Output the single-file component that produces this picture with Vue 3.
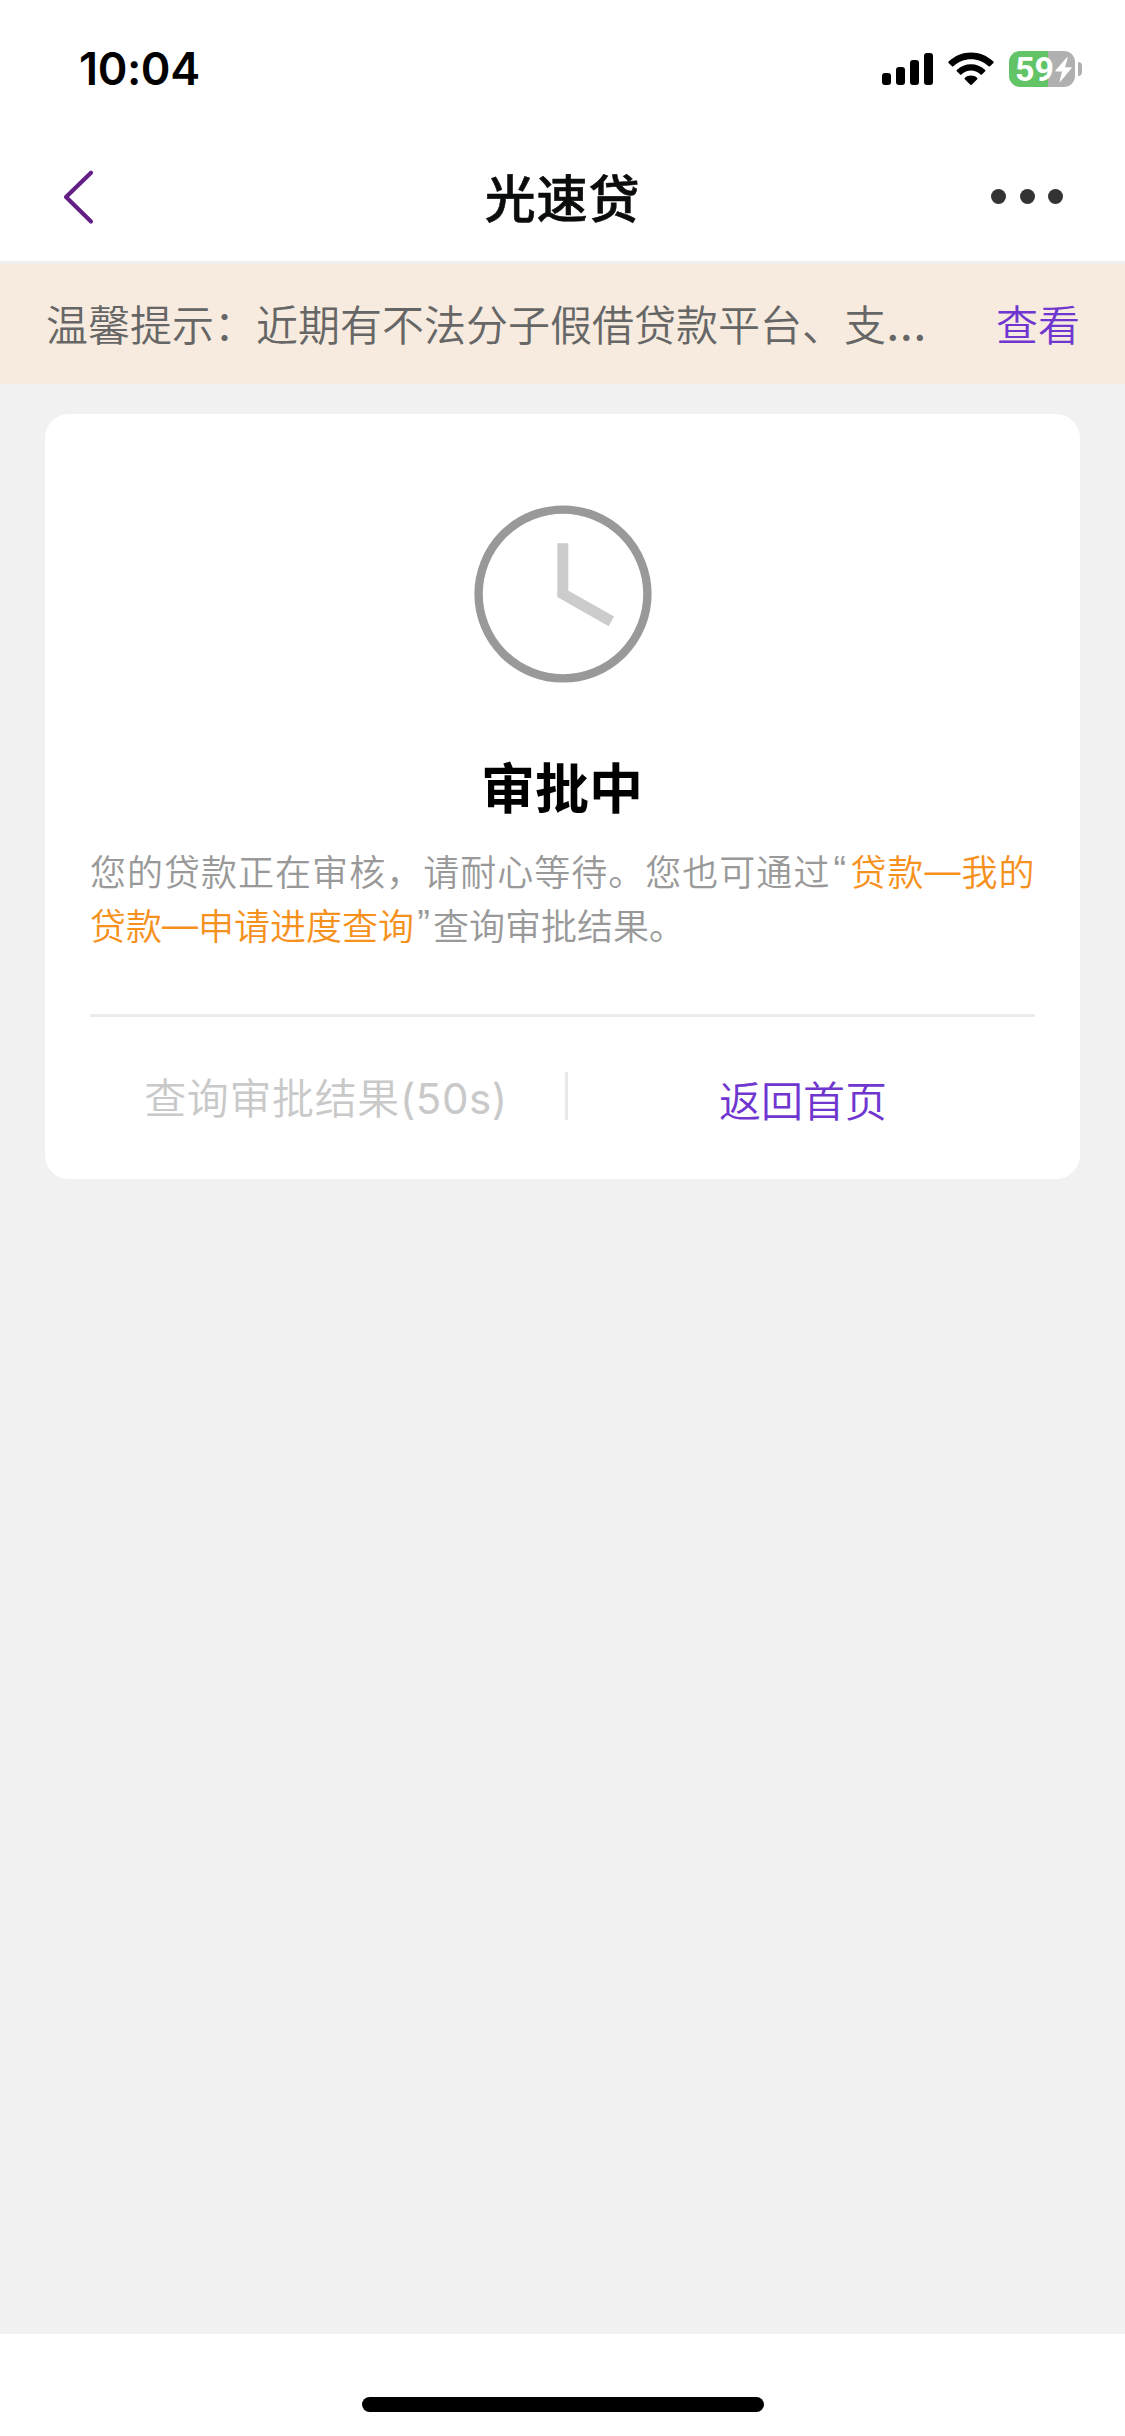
<script setup>
const title = '光速贷'
const notice = '温馨提示：近期有不法分子假借贷款平台、支'
const bars = [12, 18, 25, 32]
const level = 59
const seconds = 50
</script>

<template>
  <div class="screen">
    <header class="status">
      <span class="time">10:04</span>
      <div class="indicators">
        <div class="signal">
          <i v-for="h in bars" :key="h" :style="{ height: h + 'px' }"></i>
        </div>
        <svg class="wifi" width="46" height="34" viewBox="0 0 46 34">
          <path d="M.6 9.6C13 -2.6 33 -2.6 45.4 9.6Q46 10.3 45.4 11L42 14.3Q41.4 14.9 40.7 14.3C30.5 4.8 15.5 4.8 5.3 14.3Q4.6 14.9 4 14.3L.6 11Q0 10.3 .6 9.6Z" />
          <path d="M8.8 17.9C16.6 10.3 29.4 10.3 37.2 17.9Q37.9 18.5 37.2 19.2L33.9 22.5Q33.3 23 32.6 22.5C27 17.3 19 17.3 13.4 22.5Q12.7 23 12.1 22.5L8.8 19.2Q8.1 18.5 8.8 17.9Z" />
          <path d="M16.8 26C20.2 22.8 25.8 22.8 29.2 26Q29.9 26.6 29.2 27.3L23.7 32.7Q23 33.3 22.3 32.7L16.8 27.3Q16.1 26.6 16.8 26Z" />
        </svg>
        <div class="battery">
          <div class="cell">
            <span class="level">{{ level }}</span>
            <svg width="17" height="25" viewBox="0 0 17 25">
              <path d="M12 .3L.4 13.6Q0 14.4 .9 14.4H7L4.6 24.2Q4.8 25 5.5 24.5L16.5 11.2Q17 10.3 16 10.3H10L12.7 .9Q12.8 0 12 .3Z" fill="#fff" />
            </svg>
          </div>
          <i class="nub"></i>
        </div>
      </div>
    </header>

    <nav class="nav">
      <svg class="back" width="34" height="58" viewBox="0 0 34 58">
        <path d="M29 4.7L4 29L29 53.5" fill="none" stroke="#641f87" stroke-width="4.2" stroke-linecap="round" stroke-linejoin="round" />
      </svg>
      <h1>{{ title }}</h1>
      <div class="more"><i></i><i></i><i></i></div>
    </nav>

    <section class="notice">
      <p>{{ notice }}<span class="latin dots">…</span></p>
      <a>查看</a>
    </section>

    <main>
      <section class="card">
        <svg class="clock" width="178" height="178" viewBox="0 0 178 178">
          <circle cx="89" cy="89" r="84.4" fill="none" stroke="#999" stroke-width="8.4" />
          <path d="M88.8 38.2V88.8L137.4 116.4" fill="none" stroke="#ccc" stroke-width="11" />
        </svg>
        <h2>审批中</h2>
        <div class="desc">
          <div class="wide">您的贷款正在审核，请耐心等待。您也可通过<span class="quote">“</span><em>贷款<span class="dash">—</span>我的</em></div>
          <div><em>贷款<span class="dash">—</span>申请进度查询</em><span class="quote">”</span>查询审批结果。</div>
        </div>
        <footer class="actions">
          <span class="query">查询审批结果<span class="latin">({{ seconds }}s)</span></span>
          <i class="sep"></i>
          <a class="home">返回首页</a>
        </footer>
      </section>
    </main>

    <div class="bottom"><i></i></div>
  </div>
</template>

<style>
body { margin: 0; }
</style>

<style scoped>
* { box-sizing: border-box; }
.screen {
  display: flex;
  flex-direction: column;
  width: 1125px;
  height: 2436px;
  background: #fff;
  font-family: "Noto Sans CJK SC", sans-serif;
  overflow: hidden;
  white-space: nowrap;
}
i, em { font-style: normal; }
.latin { font-family: Inter, sans-serif; font-weight: 400; line-height: 1; }
.dots { font-size: 47px; }
.quote {
  margin: 0 3.2px;
  font-family: "Liberation Sans", sans-serif;
  font-size: 38px;
  line-height: 1;
  vertical-align: 3px;
}
.dash { font-family: "Liberation Sans", sans-serif; line-height: 1; vertical-align: 3px; }

.status {
  display: flex;
  justify-content: space-between;
  height: 138px;
  padding: 0 43px 0 79px;
}
.time {
  margin-top: 39px;
  font: 600 45px/60px Inter, sans-serif;
  letter-spacing: -.4px;
}
.indicators { display: flex; align-items: flex-start; }
.signal {
  display: flex;
  align-items: flex-end;
  gap: 5px;
  height: 32px;
  margin-top: 53px;
}
.signal i { width: 9px; border-radius: 3px; background: #000; }
.wifi { margin: 52px 0 0 15px; }
.battery { display: flex; align-items: center; gap: 3px; margin: 51px 0 0 15px; }
.cell {
  display: flex;
  align-items: center;
  width: 66px;
  height: 36px;
  padding-left: 6px;
  border-radius: 11px;
  background: linear-gradient(90deg, #62c466 39px, #b0b0b0 39px);
}
.level {
  width: 40px;
  color: #fff;
  font: 700 34px/36px Roboto, sans-serif;
}
.nub { width: 4px; height: 14px; border-radius: 0 5px 5px 0; background: #b0b0b0; }

.nav {
  display: flex;
  justify-content: space-between;
  align-items: center;
  height: 126px;
  padding: 0 62px;
  border-bottom: 3px solid #efefef;
}
.back { margin: -6px 0 0; }
h1 {
  margin: -7px 0 0 38px;
  color: #0b0c0c;
  font-size: 51px;
  font-weight: 500;
  line-height: 72px;
  letter-spacing: .8px;
  -webkit-text-stroke: .6px #0b0c0c;
}
.more { display: flex; gap: 13.5px; margin-top: -7px; }
.more i { width: 15px; height: 15px; border-radius: 50%; background: #333; }

.notice {
  display: flex;
  justify-content: space-between;
  align-items: center;
  height: 120px;
  padding: 0 45px 3px 46px;
  background: #f6ebde;
  color: #666;
  font-size: 42px;
  font-weight: 350;
  line-height: 60px;
}
.notice p { margin: 0; }
a { color: #7036d0; }

main { flex: 1; padding: 30px 45px 0; background: #f1f1f1; }
.card {
  height: 765px;
  padding: 91px 45px 0;
  border-radius: 24px;
  background: #fff;
}
.clock { display: block; margin: 0 auto; }
h2 {
  margin: 65px 1px 0 0;
  font-size: 54px;
  font-weight: 700;
  line-height: 76px;
  text-align: center;
}
.desc {
  margin-top: 19px;
  height: 171px;
  color: #999;
  font-size: 36px;
  font-weight: 350;
  line-height: 54px;
}
.wide { letter-spacing: 1.02px; }
em { color: #f6911e; }
.actions {
  display: flex;
  align-items: center;
  height: 168px;
  border-top: 3px solid #ebebeb;
  font-size: 42px;
  font-weight: 350;
  line-height: 60px;
}
.query {
  width: 475px;
  margin-top: -7px;
  padding-right: 3px;
  color: #c9c9c9;
  text-align: center;
  letter-spacing: .6px;
}
.sep { width: 3px; height: 48px; margin-top: -7px; background: #e9e9e9; }
.home { flex: 1; margin-top: -2px; padding-left: 3px; text-align: center; }

.bottom { display: flex; justify-content: center; height: 102px; padding-top: 63px; }
.bottom i { width: 402px; height: 15px; border-radius: 8px; background: #000; }
</style>
